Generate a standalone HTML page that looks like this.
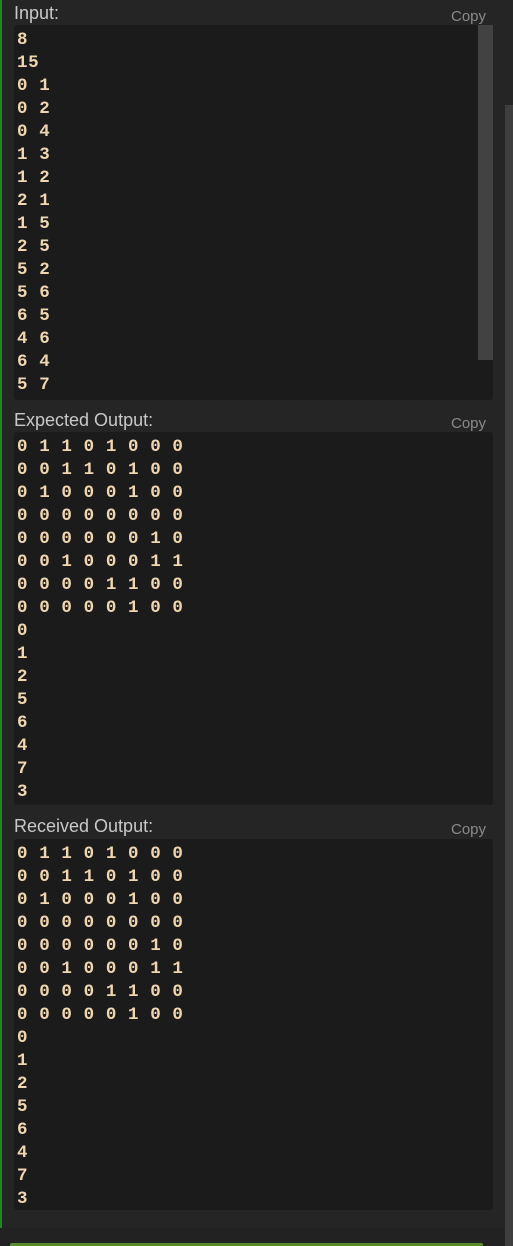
<!DOCTYPE html>
<html><head><style>
html,body{margin:0;padding:0;width:513px;height:1246px;background:#252526;overflow:hidden;position:relative;font-family:"Liberation Sans",sans-serif}
.gl{position:absolute;left:0;top:0;width:2px;height:1228px;background:#1e8a1e}
.bot{position:absolute;left:0;top:1228px;width:505px;height:18px;background:#222223}
.gbar{position:absolute;left:10px;top:1243px;width:473px;height:4px;background:#5a8a2e;border-radius:3px}
.osb{position:absolute;left:505px;top:105px;width:8px;height:1141px;background:#3e3e3e}
.lab{position:absolute;left:14px;font-size:18px;color:#c8c8c8}
.copy{position:absolute;left:451px;font-size:15px;color:#8a8a8a}
.box{position:absolute;left:14px;width:479px;background:#1b1b1b;border-radius:3px}
pre{margin:0;padding:4px 0 0 3px;font-family:"Liberation Mono",monospace;font-weight:bold;font-size:17.5px;line-height:23px;color:#f0d6b0;letter-spacing:0.6px}
.isb{position:absolute;left:478px;top:25px;width:15px;height:335px;background:#424242}
</style></head><body>
<div class="gl"></div><div class="osb"></div><div class="bot"></div><div class="gbar"></div>
<div class="lab" style="top:3px">Input:</div><div class="copy" style="top:8px">Copy</div>
<div class="box" style="top:25px;height:375px"><pre>8
15
0 1
0 2
0 4
1 3
1 2
2 1
1 5
2 5
5 2
5 6
6 5
4 6
6 4
5 7</pre></div>
<div class="isb"></div>
<div class="lab" style="top:410px">Expected Output:</div><div class="copy" style="top:415px">Copy</div>
<div class="box" style="top:432px;height:373px"><pre>0 1 1 0 1 0 0 0
0 0 1 1 0 1 0 0
0 1 0 0 0 1 0 0
0 0 0 0 0 0 0 0
0 0 0 0 0 0 1 0
0 0 1 0 0 0 1 1
0 0 0 0 1 1 0 0
0 0 0 0 0 1 0 0
0
1
2
5
6
4
7
3</pre></div>
<div class="lab" style="top:816px">Received Output:</div><div class="copy" style="top:821px">Copy</div>
<div class="box" style="top:839px;height:371px"><pre>0 1 1 0 1 0 0 0
0 0 1 1 0 1 0 0
0 1 0 0 0 1 0 0
0 0 0 0 0 0 0 0
0 0 0 0 0 0 1 0
0 0 1 0 0 0 1 1
0 0 0 0 1 1 0 0
0 0 0 0 0 1 0 0
0
1
2
5
6
4
7
3</pre></div>
</body></html>
